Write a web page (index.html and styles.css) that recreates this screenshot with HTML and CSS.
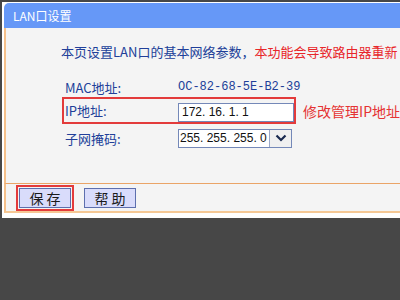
FILE: index.html
```html
<!DOCTYPE html>
<html>
<head>
<meta charset="utf-8">
<title>LAN口设置</title>
<link rel="stylesheet" href="styles.css">
</head>
<body>
  <div class="page">
    <div class="panel">
      <div class="panel-title">LAN口设置</div>
      <div class="panel-body">
        <p class="desc">本页设置LAN口的基本网络参数，<span class="warn">本功能会导致路由器重新</span></p>

        <div class="row">
          <div class="field">
            <span class="label">MAC地址:</span>
            <span class="mac">OC-82-68-5E-B2-39</span>
          </div>
        </div>
        <div class="row row-ip">
          <div class="field field-mark">
            <span class="label">IP地址:</span>
            <span class="input">172. 16. 1. 1</span>
          </div>
          <span class="note">修改管理IP地址</span>
        </div>
        <div class="row">
          <div class="field">
            <span class="label">子网掩码:</span>
            <span class="select">
              <span class="select-value">255. 255. 255. 0</span>
              <span class="select-arrow">
                <svg width="12" height="8" viewBox="0 0 12 8"><path d="M1.5 1.5 L6 6 L10.5 1.5" fill="none" stroke="#1a2a50" stroke-width="2.2"/></svg>
              </span>
            </span>
          </div>
        </div>
      </div>
      <div class="panel-foot">
        <span class="btn-mark"><span class="btn">保 存</span></span>
        <span class="btn">帮 助</span>
      </div>
    </div>
  </div>
</body>
</html>
```

FILE: styles.css
```css
html, body {
  margin: 0;
  height: 100%;
}
body {
  background: #474747;
  font-family: "Noto Sans CJK SC", "Liberation Sans", sans-serif;
  overflow: hidden;
}
.page {
  margin: 2px 0 0 2px;
  height: 216px;
  background: #fff;
  padding: 1px 0 0 2px;
  box-sizing: border-box;
  overflow: hidden;
}
.panel-title {
  height: 25px;
  line-height: 25px;
  background: #6698f7;
  border-radius: 5px 0 0 0;
  color: #fff;
  font-size: 12px;
  padding-left: 9px;
}
.panel-body {
  background: #f4f4f4;
  border-left: 2px solid #f5c08a;
  height: 156px;
  box-sizing: border-box;
  padding: 16px 0 0 55px;
  border-bottom: 1px solid #eaa467;
}
.desc {
  margin: 0 0 17px 0;
  font-size: 13px;
  line-height: 16px;
  color: #213f99;
  white-space: nowrap;
}
.warn {
  color: #e8262a;
}
.row {
  display: flex;
  align-items: center;
  margin-left: 1px;
  font-size: 13px;
  color: #213f99;
  white-space: nowrap;
}
.field {
  display: flex;
  align-items: center;
  box-sizing: border-box;
  width: 235px;
  height: 20px;
  border: 2px solid transparent;
}
.field-mark {
  border-color: #e33b3b;
  height: 27px;
}
.row-ip {
  margin-bottom: 4px;
}
.label {
  flex-shrink: 0;
  width: 113px;
  padding-left: 1px;
}
.mac {
  font-family: "Liberation Mono", monospace;
  font-size: 12px;
  color: #213f99;
}
.input {
  width: 111px;
  height: 17px;
  line-height: 17px;
  border: 1px solid #7488b8;
  background: #fff;
  color: #111;
  font-family: "Liberation Sans", sans-serif;
  font-size: 12px;
  padding-left: 3px;
  margin-top: 3px;
}
.note {
  margin-left: 7px;
  color: #e53333;
  font-size: 14px;
}
.select {
  display: flex;
  height: 17px;
  border: 1px solid #7488b8;
  background: #fff;
  color: #111;
  font-family: "Liberation Sans", sans-serif;
  font-size: 12px;
  line-height: 17px;
}
.select-value {
  width: 89px;
  padding-left: 1px;
  overflow: hidden;
}
.select-arrow {
  width: 21px;
  border-left: 1px solid #9aa8c8;
  background: #f0f0f0;
  display: flex;
  align-items: center;
  justify-content: center;
}
.panel-foot {
  background: #f4f4f4;
  border-left: 2px solid #f5c08a;
  border-bottom: 2px solid #f5c895;
  height: 27px;
  display: flex;
  align-items: center;
  gap: 10px;
  padding-left: 10px;
}
.btn-mark {
  border: 2px solid #e33b3b;
  padding: 1px;
  display: flex;
}
.btn {
  width: 50px;
  height: 18px;
  line-height: 18px;
  background: #d9dcfb;
  border: 1px solid #5d6fae;
  text-align: center;
  font-size: 14px;
  color: #1a1a1a;
}
```
